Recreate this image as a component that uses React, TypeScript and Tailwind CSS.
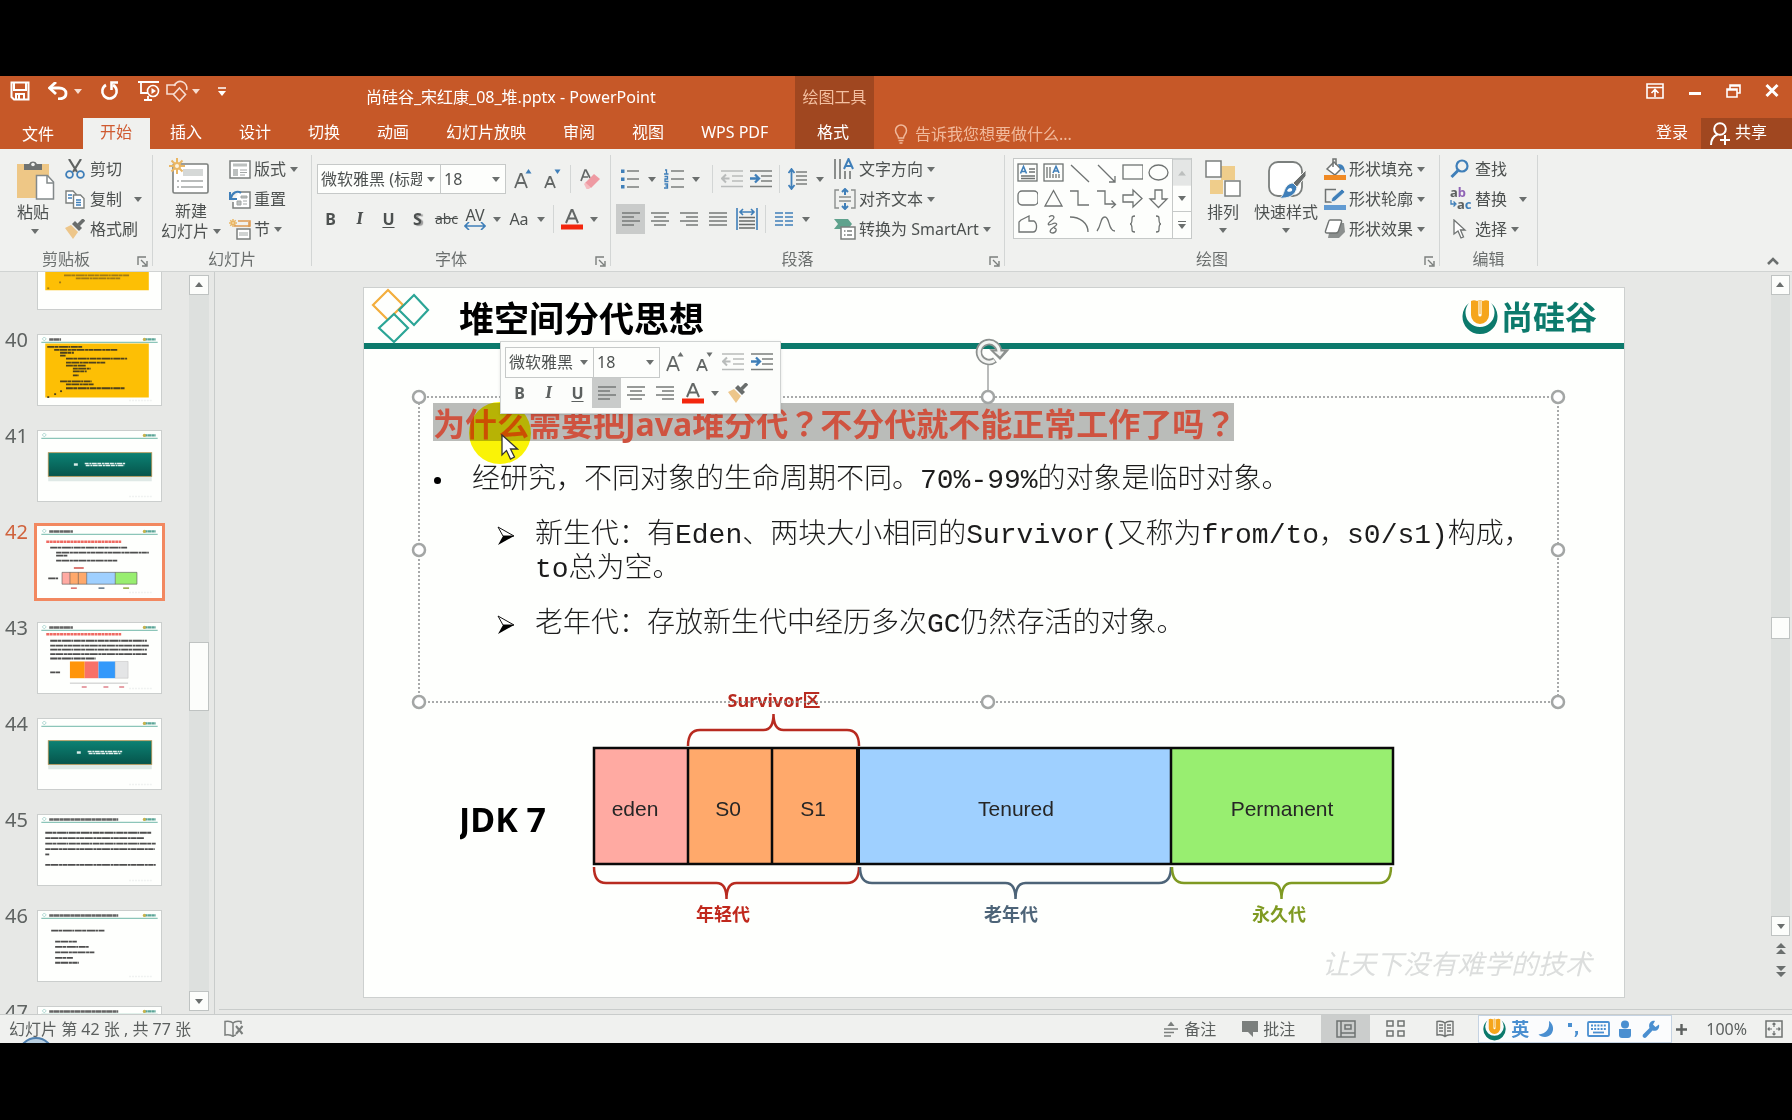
import React from "react";

type Kids = { children?: React.ReactNode };

function Svg({ w, h, vb, className = "", children }: Kids & { w: number; h: number; vb?: string; className?: string }) {
  return (
    <svg width={w} height={h} viewBox={vb ?? `0 0 ${w} ${h}`} fill="none" className={`shrink-0 ${className}`} aria-hidden="true">
      {children}
    </svg>
  );
}

const Caret = ({ className = "text-[#6b6f6e]" }: { className?: string }) => (
  <Svg w={8} h={5} className={className}>
    <path d="M0 0h8L4 5z" fill="currentColor" />
  </Svg>
);

/* ---------- title bar ---------- */

const SaveIcon = () => (
  <Svg w={20} h={20}>
    <path d="M1.500 1.500h17v17H4l-2.500-2.500z" stroke="#fff" strokeWidth="2" />
    <path d="M4 2v7h12V2M6 18v-5h8v5M9 14v4" stroke="#fff" strokeWidth="2" />
  </Svg>
);
const UndoIcon = () => (
  <Svg w={20} h={18}>
    <path d="M2 6h9c4 0 7 2 7 5.500S15 17 10 17" stroke="#fff" strokeWidth="2.800" />
    <path d="M8 0L1.500 6L8 12" stroke="#fff" strokeWidth="2.800" />
  </Svg>
);
const RedoIcon = () => (
  <Svg w={19} h={20}>
    <path d="M6 4a7.200 7.200 0 1 0 7 0" stroke="#fff" strokeWidth="2.600" />
    <path d="M18 1.500H11.500V9" stroke="#fff" strokeWidth="2.600" />
  </Svg>
);
const ShowIcon = () => (
  <Svg w={22} h={22}>
    <path d="M0 2h21M3 2v11h7M6 20h8M10 16v4" stroke="#fff" strokeWidth="1.800" />
    <circle cx="15" cy="11" r="5.500" stroke="#fff" strokeWidth="1.600" />
    <path d="M13.500 8l4.500 3l-4.500 3z" fill="#fff" />
  </Svg>
);
const ShapesIcon = () => (
  <Svg w={22} h={22}>
    <path d="M8 14H1V5h9M8 6a6.500 6.500 0 0 1 12.500 4" stroke="#f7dccf" strokeWidth="1.600" />
    <path d="M13.500 8l6 6.500l-6 6.500l-6-6.500z" stroke="#f7dccf" strokeWidth="1.600" />
  </Svg>
);

const tabs = ["插入", "设计", "切换", "动画", "幻灯片放映", "审阅", "视图", "WPS PDF"];

function TitleBar() {
  return (
    <header className="flex h-[73px] shrink-0 bg-[#c65828] text-base text-white">
      <div className="flex w-[795px] flex-col">
        <div className="flex h-[42px] items-center">
          <div className="flex w-[366px] items-center pb-3 pl-[10px]">
            <button aria-label="保存"><SaveIcon /></button>
            <button aria-label="撤消" className="ml-[18px] flex items-center gap-[6px]"><UndoIcon /><Caret className="text-[#f7dccf]" /></button>
            <button aria-label="恢复" className="ml-[18px]"><RedoIcon /></button>
            <button aria-label="从头开始" className="ml-[19px]"><ShowIcon /></button>
            <button aria-label="形状" className="ml-[6px] flex items-center gap-[4px]"><ShapesIcon /><Caret className="text-[#f7dccf]" /></button>
            <button aria-label="自定义快速访问工具栏" className="ml-[18px]">
              <Svg w={8} h={9}><path d="M0 1h8" stroke="#fff" strokeWidth="1.500" /><path d="M0 4h8L4 9z" fill="#fff" /></Svg>
            </button>
          </div>
          <h1 className="whitespace-nowrap">尚硅谷_宋红康_08_堆.pptx - PowerPoint</h1>
        </div>
        <nav className="flex h-[31px] items-stretch gap-[3px] whitespace-nowrap" aria-label="功能区选项卡">
          <button className="w-[80px] pr-1">文件</button>
          <button className="bg-[#f0f1ef] pb-1 pl-[17px] pr-[18px] text-[#cf5a30]">开始</button>
          {tabs.map((t) => (
            <button key={t} className="px-[17px] pb-1">{t}</button>
          ))}
        </nav>
      </div>
      <div className="flex w-[79px] flex-col bg-[#a04720]">
        <div className="flex h-[42px] items-center justify-center text-[#f3bfa0]">绘图工具</div>
        <button className="h-[31px] pb-1 pr-[3px]">格式</button>
      </div>
      <div className="flex flex-1 flex-col">
        <div className="flex h-[42px] items-start justify-end gap-6 pr-[13px] pt-[7px]">
          <button aria-label="功能区显示选项">
            <Svg w={18} h={16}><path d="M1 1h16v14H1zM1 4.500h16M9 14V7M5.500 10L9 6.500L12.500 10" stroke="#fff" strokeWidth="1.600" /></Svg>
          </button>
          <button aria-label="最小化"><Svg w={14} h={16}><path d="M1 10.500h12" stroke="#fff" strokeWidth="3" /></Svg></button>
          <button aria-label="向下还原">
            <Svg w={15} h={16}><path d="M1 6h10v8H1zM1 7h10M4 6V2h10v8h-3M4 3h10" stroke="#fff" strokeWidth="1.600" /></Svg>
          </button>
          <button aria-label="关闭"><Svg w={14} h={15}><path d="M1.500 2l11 11M12.500 2l-11 11" stroke="#fff" strokeWidth="3" /></Svg></button>
        </div>
        <div className="flex h-[31px] items-stretch">
          <label className="flex flex-1 items-center gap-[7px] pl-[20px] text-[#f0b99c]">
            <Svg w={14} h={20}><path d="M4.500 14c0-3-3-4-3-7.500a5.500 5.500 0 0 1 11 0c0 3.500-3 4.500-3 7.500zM4.500 16.500h5M5.500 19h3" stroke="currentColor" strokeWidth="1.500" /></Svg>
            <input aria-label="告诉我您想要做什么" placeholder="告诉我您想要做什么..." className="w-56 bg-transparent outline-none placeholder:text-[#f0b99c]" />
          </label>
          <button className="px-[13px] pb-1">登录</button>
          <button className="flex w-[91px] items-center gap-[5px] bg-[#a04720] pl-[9px]">
            <Svg w={20} h={24}><circle cx="10" cy="7" r="5.800" stroke="#fff" strokeWidth="2" /><path d="M1 23c0-6 3-9 6.500-10.500M15 13v10M10 18h10" stroke="#fff" strokeWidth="2" /></Svg>
            <span className="pb-1">共享</span>
          </button>
        </div>
      </div>
    </header>
  );
}

/* ---------- shared icons ---------- */

const G = "#7b7f7d";
const B = "#3f7fb9";

const Clipboard = () => (
  <Svg w={38} h={40}>
    <path d="M0 4h32v34H0z" fill="#eec786" />
    <path d="M7 10V4h5a4.500 4.500 0 0 1 8 0h5v6z" fill="#6e7271" />
    <circle cx="16" cy="4.500" r="1.800" fill="#f0f1ef" />
    <path d="M19.500 15.500h11l6 6.500v17h-17z" fill="#fff" stroke="#83898a" strokeWidth="1.500" />
    <path d="M30 16v7h7" stroke="#83898a" strokeWidth="1.500" />
  </Svg>
);
const Scissors = () => (
  <Svg w={20} h={20}>
    <path d="M4 0l8 13M16 0L8 13" stroke="#5f6362" strokeWidth="2.200" />
    <circle cx="4.500" cy="15.500" r="3.400" stroke={B} strokeWidth="1.800" />
    <circle cx="15.500" cy="15.500" r="3.400" stroke={B} strokeWidth="1.800" />
  </Svg>
);
const Copy = () => (
  <Svg w={20} h={20}>
    <path d="M1 2h7l3 3v9H1z" fill="#fff" stroke={G} strokeWidth="1.400" />
    <path d="M3 6h4M3 9h4" stroke={B} strokeWidth="1.300" />
    <path d="M8.500 6h7l3.500 3.500V19H8.500z" fill="#fff" stroke={G} strokeWidth="1.400" />
    <path d="M11 11h5M11 13.500h5M11 16h5" stroke={B} strokeWidth="1.300" />
  </Svg>
);
const Brush = () => (
  <Svg w={20} h={20}>
    <path d="M0 9l6-3l7 7l-5 7z" fill="#edc68a" />
    <path d="M7 5l7 7l3-3l-7-7z" fill="#696d6c" />
    <path d="M13.500 6L19 .500" stroke="#696d6c" strokeWidth="3.500" />
  </Svg>
);
const Spark = ({ s = 1 }: { s?: number }) => (
  <g stroke="#eab765" strokeWidth={s === 1 ? 2 : 3} transform={`scale(${s})`}>
    <path d="M8 0v16M0 8h16M2.500 2.500l11 11M13.500 2.500l-11 11" />
    <circle cx="8" cy="8" r="3" fill="#fbf3e2" />
  </g>
);
const NewSlide = () => (
  <Svg w={40} h={36}>
    <rect x="4" y="6" width="35" height="29" rx="1.500" fill="#fff" stroke={G} strokeWidth="1.600" />
    <path d="M14 11h20v7H14z" fill="#d5d8d7" />
    <path d="M8 23h2M12 23h22M8 29h2M12 29h22" stroke="#a2a6a5" strokeWidth="1.400" />
    <Spark />
  </Svg>
);
const Layout = () => (
  <Svg w={22} h={19}>
    <rect x="1" y="1" width="20" height="17" fill="#fff" stroke={G} strokeWidth="1.500" />
    <path d="M4 3.500h14v3H4zM4 9h5v7H4z" fill="#bcc0bf" />
    <path d="M11 10h7M11 12.500h7M11 15h5" stroke="#a2a6a5" strokeWidth="1.200" />
  </Svg>
);
const Reset = () => (
  <Svg w={22} h={20}>
    <path d="M10 3h11v16H4v-6" fill="#fff" stroke={G} strokeWidth="1.500" />
    <path d="M12 7h6v2h-6zM8 12h4v4H8zM14 12h4M14 15h4" fill="#bcc0bf" stroke="#a2a6a5" />
    <path d="M2 9c1-5 6-8 10-5M1 3v7h7" stroke={B} strokeWidth="2" />
  </Svg>
);
const Section = () => (
  <Svg w={22} h={21}>
    <Spark s={0.5} />
    <path d="M9 2h12v5H5" stroke="#dd9b55" strokeWidth="1.600" />
    <path d="M8 10h13v10H8z" fill="#fff" stroke={G} strokeWidth="1.500" />
    <path d="M10 13h9v4h-9z" fill="#d0d3d2" />
    <path d="M20 3v5" stroke="#dd9b55" strokeWidth="1.600" />
  </Svg>
);
const Grow = ({ blue = true }: { blue?: boolean }) => (
  <Svg w={18} h={20}>
    <path d="M1 19L6.500 5h1L13 19M3.500 14h8" stroke="#636766" strokeWidth="1.800" />
    <path d="M11.500 4.500L14.500 0l3 4.500z" fill={blue ? B : "#6b6f6e"} />
  </Svg>
);
const Shrink = ({ blue = true }: { blue?: boolean }) => (
  <Svg w={18} h={20}>
    <path d="M2 19L6.500 8h1l4.500 11M4 15h6" stroke="#636766" strokeWidth="1.800" />
    <path d="M11.500 .500L14.500 5l3-4.500z" fill={blue ? B : "#6b6f6e"} />
  </Svg>
);
const Eraser = () => (
  <Svg w={20} h={20}>
    <path d="M1 12L5 1h1l4 8M3 8h5" stroke="#636766" strokeWidth="1.700" />
    <path d="M5 14l9-9l6 5l-9 9z" fill="#ee9aa2" />
    <path d="M4 15l1.500-1.500l5 5L9 20H6.500z" fill="#f5bcc0" />
  </Svg>
);
const Outdent = () => (
  <Svg w={22} h={18}>
    <path d="M0 1h22M11 6h11M11 11h11M0 16.500h22" stroke="#b9bcbb" strokeWidth="1.600" />
    <path d="M8.500 8.500H1M5 4.500l-4 4l4 4" stroke="#b9bcbb" strokeWidth="2" />
  </Svg>
);
const Indent = () => (
  <Svg w={22} h={18}>
    <path d="M0 1h22M11 6h11M11 11h11M0 16.500h22" stroke={G} strokeWidth="1.600" />
    <path d="M0 8.500h8M5 4.500l4 4l-4 4" stroke={B} strokeWidth="2.300" />
  </Svg>
);
const AlignIcon = ({ kind }: { kind: "l" | "c" | "r" | "j" }) => {
  const d = {
    l: "M0 1h18M0 5h12M0 9h18M0 13h12",
    c: "M0 1h18M3 5h12M0 9h18M3 13h12",
    r: "M0 1h18M6 5h12M0 9h18M6 13h12",
    j: "M0 1h18M0 5h18M0 9h18M0 13h18",
  }[kind];
  return <Svg w={18} h={14}><path d={d} stroke="#757978" strokeWidth="1.500" /></Svg>;
};
const FontColor = () => (
  <Svg w={22} h={22}>
    <path d="M5 15L10.500 2h1L17 15M7 10.500h8" stroke="#636766" strokeWidth="2" />
    <path d="M0 16.500h22v5H0z" fill="#f3260d" />
  </Svg>
);
const Launcher = () => (
  <Svg w={11} h={11}>
    <path d="M1 9V1h8M4 4l5 5M10 5v5H5" stroke="#7b7f7d" strokeWidth="1.400" />
  </Svg>
);

/* ---------- ribbon building blocks ---------- */

function Group({ label, launcher, className = "", children }: Kids & { label: string; launcher?: boolean; className?: string }) {
  return (
    <section aria-label={label} className={`flex shrink-0 flex-col ${className}`}>
      <div className="flex h-[90px]">{children}</div>
      <div className="mt-[5px] flex h-5 items-center">
        <span className="flex-1 text-center leading-5 text-[#6b6f6e]">{label}</span>
        {launcher && <button aria-label={`${label}设置`} className="w-5 pl-[5px] pt-1"><Launcher /></button>}
      </div>
    </section>
  );
}
const Rule = () => <div className="mb-[5px] mt-px w-px shrink-0 bg-[#d3d6d5]" />;
const MiniRule = () => <div className="mx-[4px] h-7 w-px shrink-0 bg-[#d3d6d5]" />;

function Row({ icon, text, caret, gap }: { icon: React.ReactNode; text: string; caret?: boolean; gap?: boolean }) {
  return (
    <button className="flex h-[30px] items-center whitespace-nowrap">
      <span className="flex w-[25px]">{icon}</span>
      {text}
      {caret && <span className={gap ? "ml-3" : "ml-1"}><Caret /></span>}
    </button>
  );
}
function Tool({ label, on, children }: Kids & { label: string; on?: boolean }) {
  return (
    <button aria-label={label} className={`flex h-[30px] w-[29px] shrink-0 items-center justify-center ${on ? "bg-[#c9cbca]" : ""}`}>
      {children}
    </button>
  );
}
function Split({ label, children }: Kids & { label: string }) {
  return (
    <button aria-label={label} className="flex h-[30px] shrink-0 items-center">
      <span className="flex w-7 justify-center">{children}</span>
      <span className="flex w-4 justify-center"><Caret /></span>
    </button>
  );
}
function Combo({ label, value, className = "" }: { label: string; value: string; className?: string }) {
  return (
    <div className={`relative flex items-center border border-[#c6c9c8] bg-[#fdfefc] ${className}`}>
      <select aria-label={label} className="h-full w-full appearance-none overflow-hidden bg-transparent pl-[3px] pr-[18px] text-[#4d5150] outline-none">
        <option>{value}</option>
      </select>
      <span className="pointer-events-none absolute right-[5px]"><Caret /></span>
    </div>
  );
}

const galleryShapes: React.ReactNode[] = [
  <><rect x="1" y="2" width="19" height="17" /><path d="M12 7h6M12 10h6M4 14h14M4 16.500h14" /><path d="M3.500 11.500L6.500 4.500l3 7M4.500 9.500h4" stroke={B} strokeWidth="1.600" /></>,
  <><rect x="1" y="2" width="19" height="17" /><path d="M4 5v11M7 5v11M10 12v4M13 12v4M16 12v4" /><path d="M10 11L13 4.500l3 6.500M11 9h4" stroke={B} strokeWidth="1.600" /></>,
  <path d="M2 3l18 17" />,
  <path d="M2 3l17 17M19 14v6h-6" />,
  <rect x="1" y="3" width="20" height="14" />,
  <ellipse cx="10.500" cy="10.500" rx="9.500" ry="7.500" />,
  <rect x="1" y="3" width="20" height="14" rx="4" />,
  <path d="M10.500 2.500L19 18H2z" />,
  <path d="M1 3h8v14h11" />,
  <path d="M1 3h8v13h10M15.500 12.500l4 4l-4 3.500" />,
  <path d="M1 7h10V2l9 8.500l-9 8.500v-5H1z" />,
  <path d="M7 2v9H2l8.500 8.500L19 11h-5V2z" />,
  <path d="M4 6L12 2v5h5c4 3 3 11-1 11H2V8z" />,
  <path d="M6 3c4-3 7 0 3 3c-5 4-5 6 0 4c4-2 7 0 2 3s-5 6-1 6c4-1 4-5 1-5" />,
  <path d="M1 3c10 0 18 6 18 15" />,
  <path d="M1 17C6 10 4 3 9 3s3 14 10 14" />,
  <path d="M13 2c-3 0-3 1-3 3s0 5-2 5c2 0 2 3 2 5s0 3 3 3" />,
  <path d="M8 2c3 0 3 1 3 3s0 5 2 5c-2 0-2 3-2 5s0 3-3 3" />,
];

function Ribbon() {
  return (
    <div className="flex h-[123px] shrink-0 border-b border-[#d0d3d2] bg-[#f0f1ef] pt-[5px] text-base text-[#4d5150]">
      <Group label="剪贴板" launcher className="w-[152px]">
        <button className="ml-[17px] flex w-[48px] flex-col items-start pt-[6px]">
          <Clipboard />
          <span className="mt-[1px] leading-[22px]">粘贴</span>
          <span className="ml-[14px] mt-[2px] flex h-3 items-center"><Caret /></span>
        </button>
        <div className="flex flex-col">
          <Row icon={<Scissors />} text="剪切" />
          <Row icon={<Copy />} text="复制" caret gap />
          <Row icon={<Brush />} text="格式刷" />
        </div>
      </Group>
      <Rule />
      <Group label="幻灯片" className="w-[158px]">
        <button className="ml-[8px] flex w-[68px] flex-col items-start pt-[4px] leading-[20px]">
          <span className="ml-[8px]"><NewSlide /></span>
          <span className="ml-[14px] mt-[7px]">新建</span>
          <span className="flex items-center gap-1">幻灯片<Caret /></span>
        </button>
        <div className="flex flex-col">
          <Row icon={<Layout />} text="版式" caret />
          <Row icon={<Reset />} text="重置" />
          <Row icon={<Section />} text="节" caret />
        </div>
      </Group>
      <Rule />
      <Group label="字体" launcher className="w-[298px]">
        <div className="flex flex-col gap-[10px] pl-[4px] pt-[10px]">
          <div className="flex h-[30px] items-center pl-px">
            <Combo label="字体" value="微软雅黑 (标题)" className="h-[30px] w-[124px]" />
            <Combo label="字号" value="18" className="-ml-px mr-[2px] h-[30px] w-[66px]" />
            <Tool label="增大字号"><Grow /></Tool>
            <Tool label="减小字号"><Shrink /></Tool>
            <MiniRule />
            <Tool label="清除所有格式"><Eraser /></Tool>
          </div>
          <div className="flex h-[30px] items-center">
            <Tool label="加粗"><b>B</b></Tool>
            <Tool label="倾斜"><i className="font-serif text-lg font-bold">I</i></Tool>
            <Tool label="下划线"><b className="underline underline-offset-2">U</b></Tool>
            <Tool label="文字阴影"><b className="[text-shadow:2px_1px_1px_#999]">S</b></Tool>
            <Tool label="删除线"><span className="text-sm line-through">abc</span></Tool>
            <Split label="字符间距">
              <span className="flex flex-col items-center leading-[14px]">
                AV
                <Svg w={22} h={8}><path d="M1 4h20M5 0L1 4l4 4M17 0l4 4l-4 4" stroke={B} strokeWidth="1.600" /></Svg>
              </span>
            </Split>
            <Split label="更改大小写">Aa</Split>
            <MiniRule />
            <Split label="字体颜色"><FontColor /></Split>
          </div>
        </div>
      </Group>
      <Rule />
      <Group label="段落" launcher className="w-[393px]">
        <div className="flex w-[223px] flex-col gap-[10px] pl-[5px] pt-[10px]">
          <div className="flex h-[30px] items-center">
            <Split label="项目符号">
              <Svg w={18} h={20}><path d="M6 2h12M6 10h12M6 18h12" stroke={G} strokeWidth="1.600" /><path d="M0 .500h3.500v3.500H0zM0 8.500h3.500V12H0zM0 16h3.500v3.500H0z" fill={B} /></Svg>
            </Split>
            <Split label="编号">
              <Svg w={20} h={20}><path d="M7 2h13M7 10h13M7 18h13" stroke={G} strokeWidth="1.600" /><path d="M1 1h1.500v4M0 5h4.500M.500 7.500h3v2.500h-2.500v2.500h3.500M.500 15h3v4h-3.500M1.500 17h2" stroke={B} strokeWidth="1.300" /></Svg>
            </Split>
            <span className="ml-1"><MiniRule /></span>
            <Tool label="减少缩进量"><Outdent /></Tool>
            <Tool label="增加缩进量"><Indent /></Tool>
            <MiniRule />
            <Split label="行距">
              <Svg w={20} h={22}><path d="M8 4h11M8 8h11M8 12h11M8 16h11" stroke={G} strokeWidth="1.600" /><path d="M3.500 1v20M.500 5l3-4l3 4M.500 17l3 4l3-4" stroke={B} strokeWidth="1.800" /></Svg>
            </Split>
          </div>
          <div className="flex h-[30px] items-center">
            <Tool label="左对齐" on><AlignIcon kind="l" /></Tool>
            <Tool label="居中"><AlignIcon kind="c" /></Tool>
            <Tool label="右对齐"><AlignIcon kind="r" /></Tool>
            <Tool label="两端对齐"><AlignIcon kind="j" /></Tool>
            <Tool label="分散对齐">
              <Svg w={22} h={22}><path d="M1 0v22M21 0v22M4 4h14M7 1L4 4l3 3M15 1l3 3l-3 3" stroke={B} strokeWidth="1.600" /><path d="M3 9.500h16M3 13h16M3 16.500h16M3 20h16" stroke="#686c6b" strokeWidth="1.700" /></Svg>
            </Tool>
            <MiniRule />
            <Split label="分栏">
              <Svg w={18} h={16}><path d="M0 2h8M0 6h8M0 10h8M0 14h8M10 2h8M10 6h8M10 10h8M10 14h8" stroke={B} strokeWidth="1.700" /></Svg>
            </Split>
          </div>
        </div>
        <div className="flex flex-col">
          <Row icon={<Svg w={20} h={22}><path d="M1 1v20M6 1v20M11 13v8M16 13v8" stroke="#686c6b" strokeWidth="1.500" /><path d="M10 11L14.500 1l4.500 10M11.500 8h6" stroke={B} strokeWidth="2" /></Svg>} text="文字方向" caret />
          <Row icon={<Svg w={22} h={22}><path d="M5 2H1v18h4M17 2h4v18h-4M5 9h12M5 13h12" stroke="#8a8e8d" strokeWidth="1.400" /><path d="M11 1v6M8 4l3-3l3 3M11 21v-6M8 18l3 3l3-3" stroke={B} strokeWidth="2" /></Svg>} text="对齐文本" caret />
          <Row icon={<Svg w={22} h={22}><path d="M0 1h14l4 5l-4 5H0l4-5z" fill="#5fa28d" /><rect x="7" y="9" width="14" height="12" fill="#fff" stroke={G} strokeWidth="1.500" /><path d="M10 13h1.500M13 13h5M10 17h1.500M13 17h5" stroke={G} strokeWidth="1.300" /></Svg>} text="转换为 SmartArt" caret />
        </div>
      </Group>
      <Rule />
      <Group label="绘图" launcher className="w-[434px]">
        <div className="ml-[8px] mt-[4px] flex h-[81px] w-[179px] border border-[#c6c9c8] bg-[#fdfefc]">
          <div className="grid flex-1 grid-cols-6 grid-rows-3 place-items-center" aria-label="形状库">
            {galleryShapes.map((s, i) => (
              <button key={i} aria-label={`形状 ${i + 1}`}>
                <Svg w={21} h={21}><g stroke="#6f7372" strokeWidth="1.300">{s}</g></Svg>
              </button>
            ))}
          </div>
          <div className="flex w-[19px] flex-col divide-y divide-[#c6c9c8] border-l border-[#c6c9c8]">
            <button aria-label="上一行" className="flex flex-1 rotate-180 items-center justify-center bg-[#e4e6e5]"><Caret className="text-[#bcbfbe]" /></button>
            <button aria-label="下一行" className="flex flex-1 items-center justify-center"><Caret /></button>
            <button aria-label="其他" className="flex flex-1 flex-col items-center justify-center gap-[2px]"><span className="h-px w-2 bg-[#6b6f6e]" /><Caret /></button>
          </div>
        </div>
        <button className="ml-[12px] flex w-[38px] flex-col items-center pt-[6px]">
          <Svg w={36} h={37}>
            <path d="M16 6h14v14H16zM5 20h13v14H5z" fill="#efcd8b" />
            <rect x="1" y="1" width="15" height="16" fill="#fff" stroke={G} strokeWidth="1.500" />
            <rect x="20" y="21" width="15" height="15" fill="#fff" stroke={G} strokeWidth="1.500" />
          </Svg>
          <span className="mt-[3px] leading-[24px]">排列</span>
          <span className="flex h-3 items-center"><Caret /></span>
        </button>
        <button className="ml-[10px] flex w-[68px] flex-col items-center pt-[6px]">
          <Svg w={42} h={40}>
            <rect x="4" y="2" width="33" height="34" rx="9" fill="#fff" stroke={G} strokeWidth="1.800" />
            <path d="M41 10v6L32 27l-4-4z" fill="#696d6c" stroke="#f0f1ef" />
            <path d="M28 23l4 4c-1 8-8 12-18 11c5-2 4-6 7-11c2-3 5-4 7-4z" fill={B} stroke="#f0f1ef" />
            <path d="M22 31c1-3 4-4 5-2s-2 4-5 2z" fill="#fff" />
          </Svg>
          <span className="whitespace-nowrap leading-[24px]">快速样式</span>
          <span className="flex h-3 items-center"><Caret /></span>
        </button>
        <div className="flex flex-col pl-[4px]">
          <Row icon={<Svg w={22} h={22}><path d="M3 11l7-7l7 7l-6 6z" fill="#fff" stroke="#6f7372" strokeWidth="1.500" /><path d="M9 9V1h3v6" stroke="#6f7372" strokeWidth="1.500" /><path d="M14 6c5 0 7 3 7 9c-2-2-2-4-5-4z" fill={B} /><path d="M0 17h22v5H0z" fill="#f08a24" /></Svg>} text="形状填充" caret />
          <Row icon={<Svg w={22} h={22}><path d="M12 1.500H1.500V14H8" stroke="#6f7372" strokeWidth="1.500" /><path d="M7 14l1-4L18 1l3 3l-10 9z" fill={B} stroke="#f0f1ef" strokeWidth=".8" /><path d="M0 17h22v5H0z" fill="#629bd2" /></Svg>} text="形状轮廓" caret />
          <Row icon={<Svg w={22} h={20}><path d="M7 4h13l1 9l-6 6H4z" fill="#8b8f8e" /><path d="M6 1h10q2 0 1.500 2l-3 9q-.5 2-2.500 2H3q-2 0-1.500-2l3-9Q5 1 6 1z" fill="#fff" stroke="#6f7372" strokeWidth="1.400" /></Svg>} text="形状效果" caret />
        </div>
      </Group>
      <Rule />
      <Group label="编辑" className="w-[97px]">
        <div className="flex flex-col pl-[10px]">
          <Row icon={<Svg w={19} h={20}><circle cx="12" cy="7" r="5.500" stroke={B} strokeWidth="2.200" /><path d="M8 11.500L1.500 18" stroke={B} strokeWidth="3" /></Svg>} text="查找" />
          <Row
            icon={
              <Svg w={22} h={24}>
                <g fontSize="13" fontWeight="700">
                  <text x="0" y="10" fill="#5c605f">a<tspan fill="#8f63b5">b</tspan></text>
                  <text x="7" y="22" fill="#5c605f">a<tspan fill={B}>c</tspan></text>
                </g>
                <path d="M1 13v4h4M3.500 14.500L6 17l-2.500 2.500" stroke={B} strokeWidth="1.300" />
              </Svg>
            }
            text="替换" caret gap
          />
          <Row icon={<span className="pl-[3px]"><Svg w={14} h={20}><path d="M1 1v14l4-3l3 7l2.500-1l-3-7H12z" fill="#fff" stroke="#6f7372" strokeWidth="1.300" /></Svg></span>} text="选择" caret />
        </div>
      </Group>
      <Rule />
      <div className="flex flex-1 items-end justify-end pb-[6px] pr-[13px]">
        <button aria-label="折叠功能区"><Svg w={12} h={8}><path d="M1 7l5-5l5 5" stroke="#6b6f6e" strokeWidth="2.600" /></Svg></button>
      </div>
    </div>
  );
}

/* ---------- thumbnails ---------- */

function Lines({ rows, dark = "#222" }: { rows: [number, number, number][]; dark?: string }) {
  return (
    <g stroke={dark} strokeWidth="1.800">
      {rows.map(([x, y, w], i) => (
        <path key={i} d={`M${x} ${y}h${w}`} strokeDasharray={i % 2 ? "5 .4 8 .6 3 .4" : "7 .4 4 .6 9 .4 2 .6"} opacity=".8" />
      ))}
    </g>
  );
}
function ThumbHead({ title = 0 }: { title?: number }) {
  return (
    <g>
      <path d="M3 7.500h118" stroke="#8cc5b9" strokeWidth="1.200" />
      <path d="M4 4l2-2l2 2l-2 2z" stroke="#9ccfc8" strokeWidth=".8" />
      <path d="M107 4.500h12" stroke="#5ba597" strokeWidth="2.200" strokeDasharray="3.500 .3" />
      <circle cx="107.500" cy="4.500" r="1.600" fill="#c9b34c" />
      {title > 0 && <path d={`M11 4.500h${title}`} stroke="#222" strokeWidth="2.600" strokeDasharray="4 .3 6 .4" opacity=".7" />}
      <path d="M92 66.500h24" stroke="#f0f2f1" strokeWidth="1.500" strokeDasharray="2 1" />
    </g>
  );
}
const codeRows: [number, number, number][] = [
  [9, 12, 36], [16, 15, 64], [22, 18, 14], [22, 21, 6], [28, 24, 62], [28, 28, 40], [28, 31, 20], [35, 34, 18], [35, 37, 14], [35, 41, 6],
  [22, 47, 32], [28, 50, 28], [28, 54, 60], [22, 57, 2], [16, 60, 2], [9, 63, 2],
];
const Banner = ({ x, w }: { x: number; w: number }) => (
  <g>
    <ThumbHead />
    <path d="M10 46h105v5H10z" fill="#dfe9e6" />
    <rect x="10" y="22" width="105" height="24" fill="url(#banner)" stroke="#b9934f" strokeWidth=".8" />
    <path d={`M${x} 34h4`} stroke="#d8ebe7" strokeWidth="2.500" />
    <path d={`M${x + 11} 33h${w}M${x + 12} 35h${w - 2}`} stroke="#e4f1ee" strokeWidth="1.500" strokeDasharray="4 .7 2 .5 5 .6" />
  </g>
);
const thumbs: { n: number; art: React.ReactNode }[] = [
  { n: 39, art: <g><path d="M7 9h105v43H7z" fill="#fdbf05" /><Lines rows={[[26, 37, 66], [38, 40, 45], [21, 44, 2], [9, 50, 2]]} dark="#8a6a1a" /></g> },
  { n: 40, art: <g><ThumbHead title={12} /><path d="M7 8.500h105v55H7z" fill="#fdbf05" /><Lines rows={codeRows} /></g> },
  { n: 41, art: <Banner x={36} w={41} /> },
  {
    n: 42,
    art: (
      <g>
        <ThumbHead title={24} />
        <path d="M8 15h76" stroke="#ef6a62" strokeWidth="2.500" strokeDasharray="3 .5" />
        <Lines rows={[[12, 21, 78], [18, 26, 94], [18, 29, 12], [18, 34, 62], [10, 52, 10]]} />
        <path d="M24 46h8v12h-8z" fill="#ffaaa2" /><path d="M32 46h17v12H32z" fill="#ffa96b" /><path d="M49 46h29v12H49z" fill="#9fd0ff" /><path d="M78 46h22v12H78z" fill="#98ee70" />
        <path d="M24 46h76v12H24zM32 46v12M40.500 46v12M49 46v12M78 46v12" stroke="#555" strokeWidth=".6" />
        <path d="M36 41.500h10M33 62h6" stroke="#d05048" strokeWidth="1.500" /><path d="M61 62h6" stroke="#5c7285" strokeWidth="1.500" /><path d="M86 62h6" stroke="#8fa83c" strokeWidth="1.500" />
      </g>
    ),
  },
  {
    n: 43,
    art: (
      <g>
        <ThumbHead title={24} />
        <path d="M8 11.500h76" stroke="#ef6a62" strokeWidth="2.500" strokeDasharray="3 .5" />
        <Lines rows={[[12, 18, 98], [12, 23, 100], [12, 27, 98], [12, 31.5, 98], [12, 36, 46], [12, 50, 10]]} />
        <path d="M32 39h15v17H32z" fill="#ff950a" /><path d="M47 39h14v17H47z" fill="#f87168" /><path d="M61 39h17v17H61z" fill="#3399fb" /><path d="M78 39h13v17H78z" fill="#e4e5e6" stroke="#bbb" strokeWidth=".5" />
        <path d="M32 61h59" stroke="#aaa" strokeWidth=".7" /><path d="M44 65h5M66 65h5M82 65h5" stroke="#e0828a" strokeWidth="1.500" />
      </g>
    ),
  },
  { n: 44, art: <Banner x={39} w={35} /> },
  { n: 45, art: <g><ThumbHead title={70} /><Lines rows={[[7, 18, 108], [7, 23.500, 100], [7, 29, 112], [7, 34.500, 111], [7, 40, 4], [7, 50.500, 112]]} /></g> },
  { n: 46, art: <g><ThumbHead title={70} /><Lines rows={[[13, 20, 54], [17, 31, 22], [17, 36.500, 34], [17, 42, 40], [17, 47.500, 18], [17, 52.500, 24]]} /></g> },
  { n: 47, art: <ThumbHead title={70} /> },
];

function VScroll({ className = "", before, after, thumb, tail }: { className?: string; before: string; after: string; thumb: string; tail?: React.ReactNode }) {
  const btn = "flex h-5 w-full shrink-0 items-center justify-center border border-[#bfc3c2] bg-[#fcfdfb]";
  return (
    <div className={`flex flex-col ${className}`}>
      <button aria-label="向上滚动" className={`${btn} rotate-180`}><Caret /></button>
      <div className="flex flex-1 flex-col bg-[#dde0de]">
        <div className={before} />
        <div className={`shrink-0 border border-[#bfc3c2] bg-[#fcfdfb] ${thumb}`} />
        <div className={after} />
      </div>
      <button aria-label="向下滚动" className={btn}><Caret /></button>
      {tail}
    </div>
  );
}

function ThumbPanel() {
  return (
    <aside className="flex shrink-0 border-r border-[#c9cccb] pr-[5px]">
      <svg width="0" height="0" className="absolute" aria-hidden="true">
        <defs>
          <linearGradient id="banner" x1="0" y1="0" x2="0" y2="1">
            <stop offset="0" stopColor="#0c8274" />
            <stop offset="1" stopColor="#06544b" />
          </linearGradient>
        </defs>
      </svg>
      <div className="w-[189px] overflow-hidden">
        <ol className="-mt-[34px]">
          {thumbs.map(({ n, art }) => (
            <li key={n} className="flex h-24">
              <span className={`-mt-1 w-[37px] shrink-0 pl-[5px] text-xl leading-5 ${n === 42 ? "text-[#d0623c]" : "text-[#5f6362]"}`}>{n > 39 && n}</span>
              <button
                aria-label={`幻灯片 ${n}`}
                className={`h-[72px] w-[125px] border bg-[#fefffd] ${n === 42 ? "border-transparent outline-[3px] outline-[#f28860]" : "border-[#cbcecd]"}`}
              >
                <Svg w={123} h={70} vb="0 0 124 71">{art}</Svg>
              </button>
            </li>
          ))}
        </ol>
      </div>
      <VScroll className="my-[3px] w-5" before="flex-[349]" after="flex-[281]" thumb="h-[69px]" />
    </aside>
  );
}

/* ---------- slide ---------- */

const ULogo = ({ w, h }: { w: number; h: number }) => (
  <Svg w={w} h={h} vb="0 0 36 36">
    <path d="M7 4A17.500 17.500 0 1 0 29 4A14.500 14.500 0 1 1 7 4z" fill="#0c7a6c" />
    <path d="M9 2q3-1.500 6 0q3-1.500 6 0q3-1.500 6 0V16a9 9 0 0 1-18 0z" fill="#f5a51c" />
    <path d="M18 2.500V16" stroke="#fefffd" strokeWidth="3.200" strokeLinecap="round" />
    <path d="M18 1v14" stroke="#f5a51c" strokeWidth="1" />
  </Svg>
);

function MiniToolbar() {
  return (
    <div role="toolbar" aria-label="浮动工具栏" className="absolute left-[136px] top-[53px] flex flex-col border border-[#d0d3d2] bg-[#fcfdfb] px-1 pb-1 pt-[5px] text-base text-[#5c605f] shadow-sm">
      <div className="flex h-[31px] items-center">
        <Combo label="字体" value="微软雅黑" className="h-[31px] w-[89px]" />
        <Combo label="字号" value="18" className="-ml-px h-[31px] w-[67px]" />
        <Tool label="增大字号"><Grow blue={false} /></Tool>
        <Tool label="减小字号"><Shrink blue={false} /></Tool>
        <Tool label="减少缩进量"><Outdent /></Tool>
        <Tool label="增加缩进量"><Indent /></Tool>
      </div>
      <div className="flex h-[31px] items-center">
        <Tool label="加粗"><b>B</b></Tool>
        <Tool label="倾斜"><i className="font-serif text-lg font-bold">I</i></Tool>
        <Tool label="下划线"><b className="underline underline-offset-2">U</b></Tool>
        <Tool label="左对齐" on><AlignIcon kind="l" /></Tool>
        <Tool label="居中"><AlignIcon kind="c" /></Tool>
        <Tool label="右对齐"><AlignIcon kind="r" /></Tool>
        <Split label="字体颜色"><FontColor /></Split>
        <Tool label="格式刷"><Brush /></Tool>
      </div>
    </div>
  );
}

const Arrowhead = () => (
  <Svg w={18} h={20}>
    <path d="M1 1l16 9H6z" fill="#fff" stroke="#111" strokeWidth="1" />
    <path d="M6 10h11L1 19z" fill="#000" />
  </Svg>
);

const brace = (x1: number, x2: number, y: number, dir: number) => {
  const m = (x1 + x2) / 2;
  const b = y + 16 * dir;
  return `M${x1} ${y}Q${x1} ${b} ${x1 + 12} ${b}H${m - 10}Q${m} ${b} ${m} ${y + 32 * dir}Q${m} ${b} ${m + 10} ${b}H${x2 - 12}Q${x2} ${b} ${x2} ${y}`;
};

function HeapDiagram() {
  return (
    <svg
      role="img"
      aria-label="JDK 7 堆内存分代"
      width="940"
      height="245"
      viewBox="460 688 940 245"
      fill="none"
      className="absolute left-[96px] top-[400px] font-bold [font-family:'Noto_Sans','Noto_Sans_CJK_SC',sans-serif]"
    >
      <path d="M594 748h94v116h-94z" fill="#ffaaa2" />
      <path d="M688 748h171v116H688z" fill="#ffa96b" />
      <path d="M859 748h313v116H859z" fill="#9fd0ff" />
      <path d="M1172 748h221v116h-221z" fill="#98ee70" />
      <path d="M594 748h799v116H594zM688 748v116M772 748v116M1171 748v116" stroke="#0a0a0a" strokeWidth="2.500" />
      <path d="M858 748v116" stroke="#0a0a0a" strokeWidth="4" />
      <g fill="#262626" fontSize="21" fontWeight="400" textAnchor="middle" className="[font-family:'Liberation_Sans',Arial,sans-serif]">
        <text x="635" y="816">eden</text>
        <text x="728" y="816">S0</text>
        <text x="813" y="816">S1</text>
        <text x="1016" y="816">Tenured</text>
        <text x="1282" y="816">Permanent</text>
      </g>
      <text x="459" y="832" fontSize="34" fill="#000">JDK 7</text>
      <g strokeWidth="2.500">
        <path d={brace(688, 859, 746, -1)} stroke="#b82b20" />
        <path d={brace(594, 859, 867, 1)} stroke="#b82b20" />
        <path d={brace(860, 1171, 867, 1)} stroke="#4d6478" />
        <path d={brace(1172, 1391, 867, 1)} stroke="#7f9a22" />
      </g>
      <g fontSize="18" textAnchor="middle">
        <text x="774" y="707" fill="#b82b20">Survivor区</text>
        <text x="723" y="921" fill="#c0281c">年轻代</text>
        <text x="1011" y="921" fill="#4d6478">老年代</text>
        <text x="1279" y="921" fill="#7f9a22">永久代</text>
      </g>
    </svg>
  );
}

function SelectionFrame() {
  const handles = [[419, 397], [988, 397], [1558, 397], [419, 550], [1558, 550], [419, 702], [988, 702], [1558, 702]];
  return (
    <svg width="1160" height="372" viewBox="409 338 1160 372" fill="none" className="pointer-events-none absolute left-[45px] top-[50px]" aria-hidden="true">
      <rect x="419" y="397" width="1139" height="305" stroke="#8c8f8e" strokeWidth="1.500" strokeDasharray="2 2" />
      <path d="M988 363v30" stroke="#a3a6a5" strokeWidth="1.500" />
      <path d="M995 360A10 10 0 1 1 999 352" stroke="#8d918f" strokeWidth="6.500" />
      <path d="M991 350h17l-8 9z" fill="#8d918f" stroke="#8d918f" strokeWidth="1.500" />
      <path d="M994.500 360.500A10 10 0 1 1 999 353" stroke="#f4f5f3" strokeWidth="3" />
      <path d="M994 351.500h10l-4 5z" fill="#f4f5f3" />
      {handles.map(([x, y]) => (
        <circle key={`${x}-${y}`} cx={x} cy={y} r="6" fill="#fff" stroke="#a3a6a5" strokeWidth="2.500" />
      ))}
    </svg>
  );
}

const Ask = () => <span className="[font-family:'Noto_Sans_CJK_TC',sans-serif]" lang="zh-TW">？</span>;

function Slide() {
  return (
    <article className="relative aspect-[1260/709] w-full max-w-[1260px] bg-[#fefffd] outline outline-[#cdd0cf]">
      <div className="flex h-[61px] items-start border-b-[6px] border-[#0c7a6c] pl-[7px]">
        <Svg w={60} h={56}>
          <path d="M17 2L32 17L17 32L2 17z" stroke="#f3ae3d" strokeWidth="2.200" />
          <path d="M43 7L57 22L43 37L28 22z" stroke="#2ba596" strokeWidth="2.200" />
          <path d="M23 26L37 40L23 54L8 40z" fill="#fefffd" stroke="#2ba596" strokeWidth="2.200" />
        </Svg>
        <h2 className="ml-[28px] flex-1 pt-[9px] text-[35px] font-bold leading-[44px] text-black">堆空间分代思想</h2>
        <div className="mr-[27px] flex items-center gap-[3px] pt-[11px]">
          <ULogo w={36} h={36} />
          <span className="text-[32px] font-bold leading-[34px] text-[#0c7a6c]">尚硅谷</span>
        </div>
      </div>

      <div className="absolute left-[54px] top-[109px] w-[1139px] pl-[15px] pr-3 pt-[6px]">
        <p className="flex h-[38px] w-[801px] whitespace-nowrap bg-[#babcb9] text-[32px] font-bold leading-[38px] text-[#cf5340]">
          <span>为什么需要把Java堆分代<Ask />不分代就不能正常工作了吗<Ask /></span>
        </p>
        <ul className="mt-[23px] flex flex-col gap-[21px] text-[28px] font-light leading-[34px] text-[#1c1c1c] [font-family:'Liberation_Mono','Noto_Sans_CJK_SC',monospace]">
          <li className="flex">
            <span className="flex w-[39px] items-center"><span className="ml-[1px] h-[7px] w-[7px] rounded-full bg-black" /></span>
            经研究，不同对象的生命周期不同。70%-99%的对象是临时对象。
          </li>
          <li className="flex pl-[64px]">
            <span className="flex h-[34px] w-[38px] shrink-0 items-center"><Arrowhead /></span>
            <span>新生代：有Eden、两块大小相同的Survivor(又称为from/to，s0/s1)构成，to总为空。</span>
          </li>
          <li className="flex pl-[64px]">
            <span className="flex h-[34px] w-[38px] shrink-0 items-center"><Arrowhead /></span>
            <span>老年代：存放新生代中经历多次GC仍然存活的对象。</span>
          </li>
        </ul>
      </div>

      <HeapDiagram />
      <SelectionFrame />
      <p className="absolute bottom-4 right-8 text-[27px] italic leading-[34px] text-[#dcdedd]">让天下没有难学的技术</p>

      <div className="absolute left-[105px] top-[114px] h-[62px] w-[62px] rounded-full bg-[#fbf306] mix-blend-multiply" />
      <MiniToolbar />
      <Svg w={18} h={26} className="absolute left-[137px] top-[146px]">
        <path d="M1 1v20l4.500-4.500l4 8.500l4-2l-4-8h7z" fill="#fff" stroke="#333" strokeWidth="1.300" />
      </Svg>
    </article>
  );
}

/* ---------- status bar ---------- */

function StatusBar() {
  return (
    <footer className="flex h-[29px] shrink-0 items-center overflow-hidden border-t border-[#c9cccb] bg-[#f0f1ef] text-base text-[#5c605f]">
      <div className="relative flex h-full flex-1 items-center pl-[9px]">
        <span className="absolute left-[18px] top-[22px] h-9 w-9 rounded-full border-2 border-[#4f7fae] bg-[#b9cfe0]" />
        <span className="relative whitespace-nowrap leading-6">幻灯片 第 42 张 , 共 77 张</span>
        <button aria-label="拼写检查" className="ml-[33px]">
          <Svg w={20} h={18}><path d="M9 3C7 1 4 1 1 1.500V15c3-.5 6-.5 8 1.500M9 3v13M9 3c2-2 5-2 8-1.500V4M9 16.500c1-1 2-1.500 3-1.500" stroke={G} strokeWidth="1.500" /><path d="M12 6l6.500 8M18.500 6L12 14" stroke={G} strokeWidth="2" /></Svg>
        </button>
      </div>
      <button className="mr-[26px] flex items-center gap-[5px]">
        <Svg w={16} h={18}><path d="M4.500 6L8 1.500L11.500 6z" fill={G} /><path d="M1 9h14M1 12.500h10M1 16h7M2 9h12" stroke={G} strokeWidth="1.500" /></Svg>
        备注
      </button>
      <button className="mr-[26px] flex items-center gap-[5px]">
        <Svg w={16} h={16}><path d="M0 0h16v11h-5v5l-5-5H0z" fill={G} /></Svg>
        批注
      </button>
      <button aria-label="普通视图" className="flex h-full w-[49px] items-center justify-center bg-[#cbcdcc]">
        <Svg w={20} h={18}><path d="M1 1h18v16H1zM5 1v16M5 13h14M9 5h6v4H9z" stroke="#6f7372" strokeWidth="1.500" /></Svg>
      </button>
      <button aria-label="幻灯片浏览" className="ml-[16px]">
        <Svg w={20} h={18}><path d="M1 1h6v5H1zM12 1h6v5h-6zM1 11h6v5H1zM12 11h6v5h-6z" stroke="#6f7372" strokeWidth="1.500" /></Svg>
      </button>
      <button aria-label="阅读视图" className="ml-[30px]">
        <Svg w={18} h={18}><path d="M9 3C7 1 4 1 1 1.500V15c3-.5 6-.5 8 1.500c2-2 5-2 8-1.500V1.500C14 1 11 1 9 3zM9 3v14M3 5h4M3 8h4M3 11h4M11 5h4M11 8h4M11 11h4" stroke="#6f7372" strokeWidth="1.400" /></Svg>
      </button>
      <div className="ml-[24px] flex h-full w-[194px] items-center border border-[#c5d3e2] bg-[#fbfcfd] pl-[4px] text-[#4a8fd0]">
        <ULogo w={23} h={23} />
        <span className="ml-[5px] text-lg font-bold leading-6">英</span>
        <Svg w={18} h={18} className="ml-[9px]"><path d="M11 1c6 4 6 15-4 16c-3 0-5-1-6.500-2.500C8 14 12 9 11 1z" fill="currentColor" /></Svg>
        <Svg w={12} h={18} className="ml-[11px]"><path d="M1 3h4v4H1z" fill="currentColor" /><path d="M8 11h3v3l-2 3H7.500l1-3z" fill="currentColor" /></Svg>
        <Svg w={23} h={16} className="ml-[8px]"><rect x="1" y="1" width="21" height="14" rx="1" stroke="currentColor" strokeWidth="1.800" /><path d="M4 4.500h15M4 8h15" stroke="currentColor" strokeWidth="2" strokeDasharray="2 1.200" /><path d="M6 11.500h11" stroke="currentColor" strokeWidth="1.800" /></Svg>
        <Svg w={14} h={18} className="ml-[8px]"><circle cx="7" cy="4.500" r="4" fill="currentColor" /><path d="M1 9h12v6q0 3-3 3H4q-3 0-3-3z" fill="currentColor" /></Svg>
        <Svg w={18} h={18} className="ml-[10px]"><path d="M13 1c-4-1-7 3-5.500 7L1 14.500q-1 2 .500 3t3-.5L10.500 10.500c4 1.500 7.500-2 6.500-6L13.500 7L11 4.500z" fill="currentColor" /></Svg>
      </div>
      <button aria-label="放大" className="ml-[4px]"><Svg w={11} h={11}><path d="M5.500 0v11M0 5.500h11" stroke="#5c605f" strokeWidth="2.400" /></Svg></button>
      <button className="ml-[19px]">100%</button>
      <button aria-label="适应窗口" className="ml-[18px] mr-[9px]">
        <Svg w={18} h={18}><path d="M1 1h16v16H1z" stroke="#6f7372" strokeWidth="1.500" /><path d="M9 3v4M7.500 4.500L9 3l1.500 1.500M9 15v-4M7.500 13.500L9 15l1.500-1.500M3 9h4M4.500 7.500L3 9l1.500 1.500M15 9h-4M13.500 7.500L15 9l-1.500 1.500" stroke="#6f7372" strokeWidth="1.200" /></Svg>
      </button>
    </footer>
  );
}

export default function App() {
  return (
    <div className="flex h-screen flex-col bg-black pb-[77px] pt-[76px] [font-family:'Noto_Sans','Noto_Sans_CJK_SC',sans-serif]">
      <TitleBar />
      <Ribbon />
      <div className="flex min-h-0 flex-1 bg-[#e7e8e6]">
        <ThumbPanel />
        <main className="ml-1 mb-[4px] flex flex-1 border-b border-[#c9cccb]">
          <div className="flex flex-1 items-center justify-center pr-[2px] pt-[3px]">
            <Slide />
          </div>
          <VScroll
            className="mr-[2px] mt-[3px] w-[19px]"
            before="flex-[323]"
            after="flex-[277]"
            thumb="h-[22px]"
            tail={
              <div className="flex flex-col items-center gap-3 pb-[32px] pt-[7px]">
                <button aria-label="上一张幻灯片"><Svg w={10} h={11}><path d="M5 0l5 5H0zM5 6l5 5H0z" fill="#6b6f6e" /></Svg></button>
                <button aria-label="下一张幻灯片"><Svg w={10} h={11}><path d="M0 0h10L5 5zM0 6h10l-5 5z" fill="#6b6f6e" /></Svg></button>
              </div>
            }
          />
        </main>
      </div>
      <StatusBar />
    </div>
  );
}
